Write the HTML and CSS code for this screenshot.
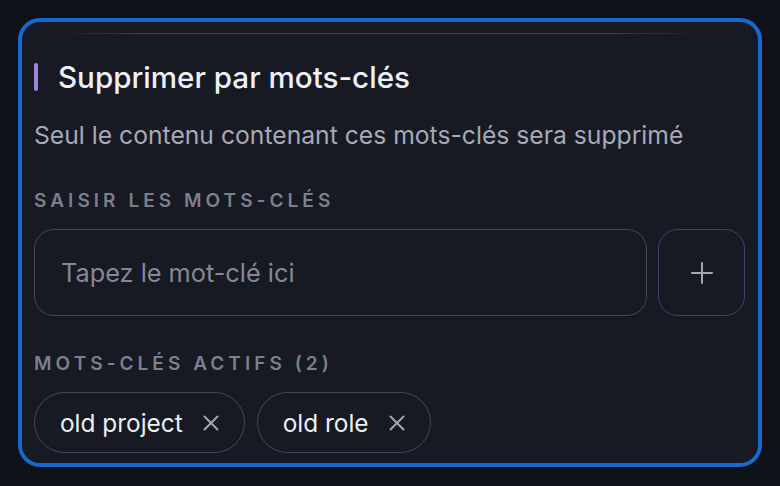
FILE: index.html
```html
<!DOCTYPE html>
<html lang="fr">
<head>
<meta charset="utf-8">
<link rel="stylesheet" href="styles.css">
</head>
<body>
<section class="card">
  <div class="divider"></div>
  <div class="title-row">
    <span class="accent"></span>
    <h2 class="title">Supprimer par mots-clés</h2>
  </div>
  <p class="subtitle">Seul le contenu contenant ces mots-clés sera supprimé</p>
  <div class="label">Saisir les mots-clés</div>
  <div class="input-row">
    <div class="input"><span class="placeholder">Tapez le mot-clé ici</span></div>
    <button class="add-btn" aria-label="Ajouter">
      <svg width="22" height="22" viewBox="0 0 22 22" fill="none" stroke="currentColor" stroke-width="2" stroke-linecap="round"><path d="M11 1v20M1 11h20"/></svg>
    </button>
  </div>
  <div class="label label-active">Mots-clés actifs (2)</div>
  <div class="chips">
    <span class="chip">old project
      <svg class="x" width="16" height="16" viewBox="0 0 16 16" fill="none" stroke="currentColor" stroke-width="2" stroke-linecap="round"><path d="M1.5 1.5l13 13M14.5 1.5l-13 13"/></svg>
    </span>
    <span class="chip">old role
      <svg class="x" width="16" height="16" viewBox="0 0 16 16" fill="none" stroke="currentColor" stroke-width="2" stroke-linecap="round"><path d="M1.5 1.5l13 13M14.5 1.5l-13 13"/></svg>
    </span>
  </div>
</section>
</body>
</html>
```
FILE: styles.css
```css
* { box-sizing: border-box; }
html, body { margin: 0; padding: 0; }
body {
  background: #0f1118;
  font-family: Inter, "Noto Sans", "Liberation Sans", sans-serif;
  padding: 18px 18px 0 18px;
  width: 780px;
  height: 486px;
  overflow: hidden;
}
.card {
  width: 744px;
  height: 449px;
  border: 4px solid #1769d0;
  border-radius: 22px;
  background: #171923;
  padding: 11px 12px 10px 12px;
}
.divider {
  height: 1px;
  margin: 0 38px 0 24px;
  background: linear-gradient(90deg, rgba(70,72,84,0) 0%, #3c3e4a 12%, #3c3e4a 85%, rgba(70,72,84,0) 100%);
}
.title-row {
  display: flex;
  align-items: center;
  gap: 20px;
  margin-top: 29px;
  height: 28px;
}
.accent {
  width: 4px;
  height: 28px;
  border-radius: 3px;
  background: #9a86dc;
}
.title {
  margin: 0;
  font-size: 29.6px;
  font-weight: 500;
  color: #eef0f7;
  line-height: 28px;
  white-space: nowrap;
}
.subtitle {
  margin: 30px 0 0 0;
  font-size: 24.7px;
  line-height: 28px;
  color: #a7a9b8;
  white-space: nowrap;
}
.label {
  margin-top: 42px;
  font-size: 19px;
  line-height: 20px;
  font-weight: 600;
  letter-spacing: 4.05px;
  text-transform: uppercase;
  color: #7c7f8e;
  white-space: nowrap;
}
.input-row {
  display: flex;
  gap: 11px;
  margin-top: 18px;
}
.input {
  width: 613px;
  height: 87px;
  border: 1.5px solid #464855;
  border-radius: 20px;
  display: flex;
  align-items: center;
  padding-left: 26px;
}
.placeholder {
  font-size: 25.3px;
  color: #858898;
}
.add-btn {
  width: 87px;
  height: 87px;
  border: 1.5px solid #433e72;
  border-radius: 20px;
  background: transparent;
  color: #a3a5b4;
  display: flex;
  align-items: center;
  justify-content: center;
  padding: 0;
}
.label-active {
  margin-top: 38px;
}
.chips {
  display: flex;
  gap: 12px;
  margin-top: 18px;
}
.chip {
  display: inline-flex;
  align-items: center;
  height: 61px;
  border: 1.5px solid #464855;
  border-radius: 31px;
  padding: 0 25px 0 25px;
  font-size: 24.4px;
  color: #eceef5;
  gap: 20px;
}
.x {
  color: #a3a5b4;
}
```
